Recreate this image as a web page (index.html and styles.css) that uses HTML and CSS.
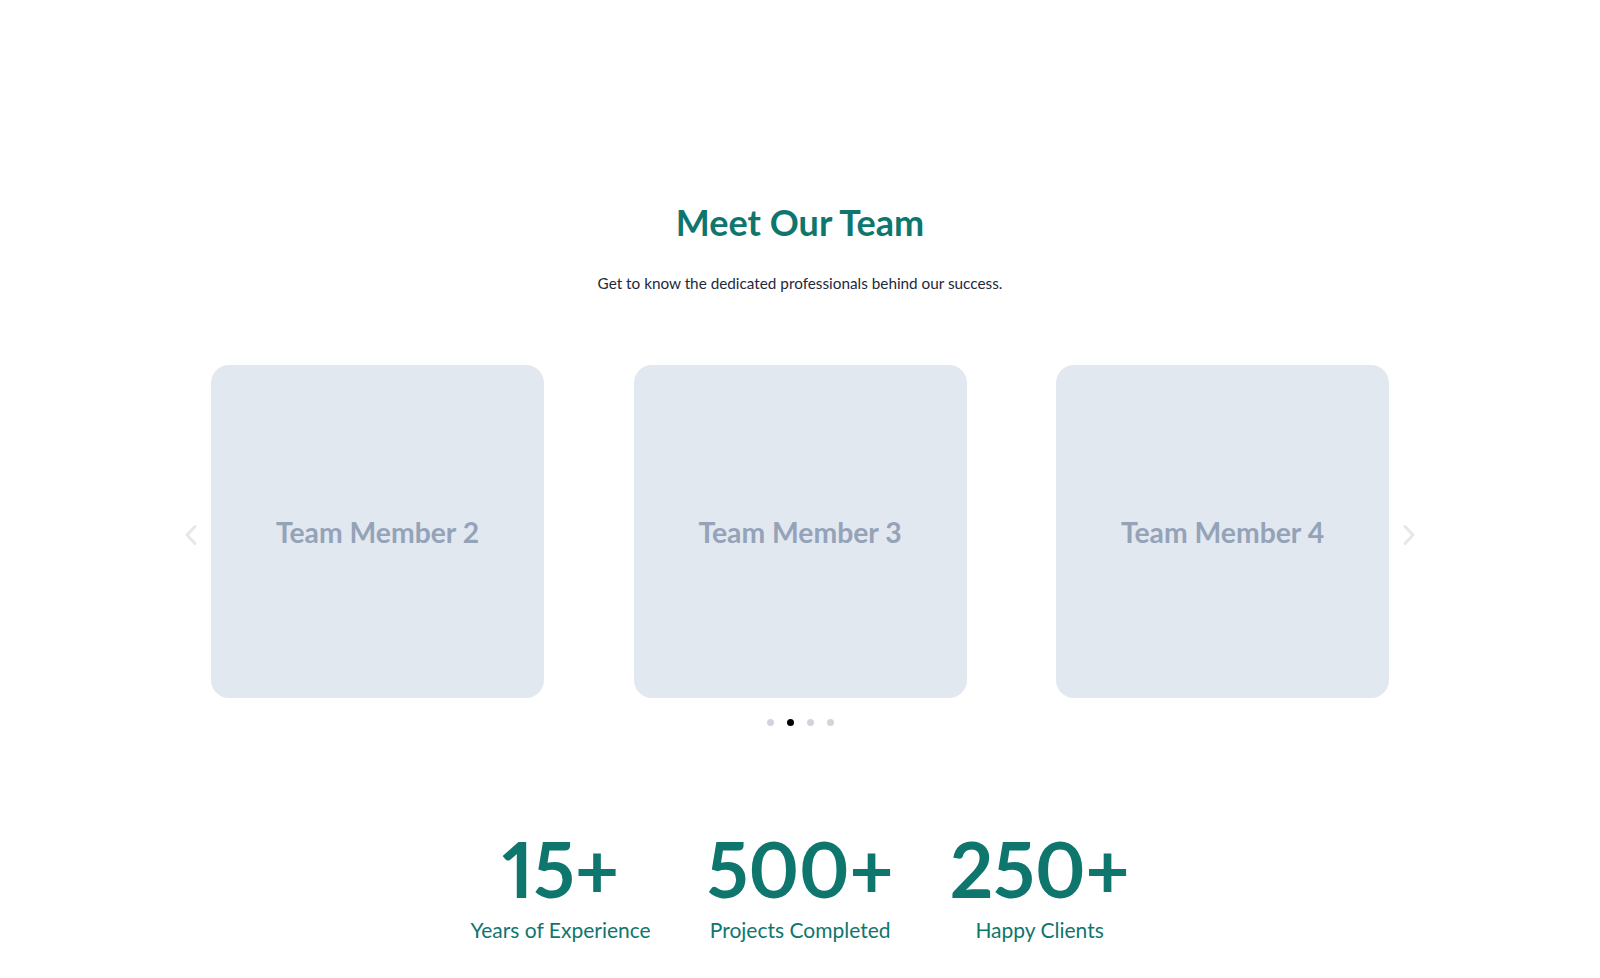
FILE: index.html
```html
<!DOCTYPE html>
<html lang="en">
<head>
    <meta charset="UTF-8">
    <meta name="viewport" content="width=device-width, initial-scale=1.0">
    <title>Meet Our Team</title>
    <link rel="stylesheet" href="styles.css">
</head>
<body>
    <section class="team">
        <h2 class="team-title">Meet Our Team</h2>
        <p class="team-subtitle">Get to know the dedicated professionals behind our success.</p>

        <div class="carousel">
            <button class="arrow" aria-label="Previous">
                <svg width="14" height="22" viewBox="0 0 14 22"><path d="M11 2.5L3 11l8 8.5" fill="none" stroke="currentColor" stroke-width="3" stroke-linecap="round" stroke-linejoin="round"/></svg>
            </button>
            <div class="track">
                <div class="card">Team Member 2</div>
                <div class="card">Team Member 3</div>
                <div class="card">Team Member 4</div>
            </div>
            <button class="arrow" aria-label="Next">
                <svg width="14" height="22" viewBox="0 0 14 22"><path d="M3 2.5l8 8.5-8 8.5" fill="none" stroke="currentColor" stroke-width="3" stroke-linecap="round" stroke-linejoin="round"/></svg>
            </button>
        </div>

        <div class="dots">
            <span class="dot"></span>
            <span class="dot active"></span>
            <span class="dot"></span>
            <span class="dot"></span>
        </div>

        <div class="stats">
            <div class="stat">
                <div class="stat-number">15+</div>
                <div class="stat-label">Years of Experience</div>
            </div>
            <div class="stat">
                <div class="stat-number">500+</div>
                <div class="stat-label">Projects Completed</div>
            </div>
            <div class="stat">
                <div class="stat-number">250+</div>
                <div class="stat-label">Happy Clients</div>
            </div>
        </div>
    </section>
</body>
</html>
```

FILE: styles.css
```css
body {
    margin: 0;
    background-color: #ffffff;
    font-family: Lato, "Open Sans", sans-serif;
    color: #1e293b;
}
.team {
    padding-top: 201px;
    display: flex;
    flex-direction: column;
    align-items: center;
}
.team-title {
    margin: 0;
    font-size: 36px;
    line-height: 1.2;
    font-weight: 700;
    color: #0f766e;
}
.team-subtitle {
    margin: 27px 0 0;
    font-size: 15.3px;
    line-height: 24px;
    color: #1e293b;
}
.carousel {
    margin-top: 70px;
    display: flex;
    align-items: center;
    gap: 8px;
}
.arrow {
    width: 24px;
    height: 24px;
    padding: 0;
    border: none;
    background: none;
    color: #e5e7eb;
    display: flex;
    justify-content: center;
    align-items: center;
    margin-top: 6px;
    cursor: pointer;
}
.track {
    display: flex;
    gap: 89.5px;
}
.card {
    width: 333px;
    height: 333px;
    background-color: #e2e8f0;
    border-radius: 18px;
    display: flex;
    justify-content: center;
    align-items: center;
    font-size: 28.3px;
    font-weight: 700;
    color: #94a3b8;
}
.dots {
    margin-top: 21px;
    display: flex;
    gap: 13px;
}
.dot {
    width: 7px;
    height: 7px;
    border-radius: 50%;
    background-color: #d1d5db;
}
.dot.active {
    background-color: #000000;
}
.stats {
    margin-top: 104px;
    display: flex;
    gap: 56px;
    color: #0f766e;
    text-align: center;
}
.stat-number {
    font-size: 76px;
    line-height: 1;
    font-weight: 700;
    font-variant-numeric: proportional-nums;
    padding-top: 1px;
}
.stat-label {
    margin-top: 9px;
    font-size: 21px;
    line-height: 28px;
}
```
